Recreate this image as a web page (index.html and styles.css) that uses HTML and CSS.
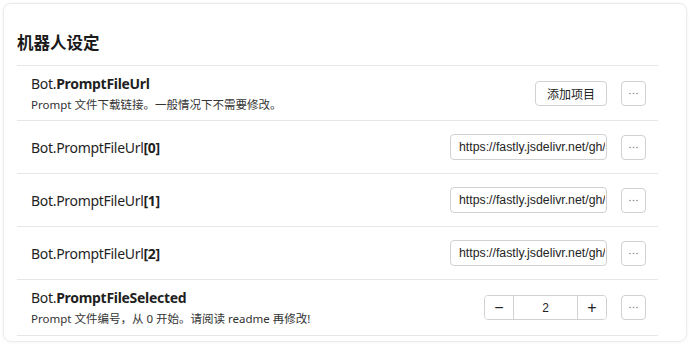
FILE: index.html
```html
<!DOCTYPE html>
<html lang="zh-CN">
<head>
<meta charset="utf-8">
<title>机器人设定</title>
<link rel="stylesheet" href="styles.css">
</head>
<body>
<div class="card">
  <h2 class="title">机器人设定</h2>
  <div class="list">
    <div class="row row-tall">
      <div class="info">
        <div class="name">Bot.<b>PromptFileUrl</b></div>
        <div class="desc">Prompt 文件下载链接。一般情况下不需要修改。</div>
      </div>
      <div class="ctrl">
        <button class="btn btn-add">添加项目</button>
        <button class="btn btn-more" aria-label="更多"><svg class="dots" width="11" height="3" viewBox="0 0 11 3"><circle cx="2" cy="1.5" r="0.8"/><circle cx="5.5" cy="1.5" r="0.8"/><circle cx="9" cy="1.5" r="0.8"/></svg></button>
      </div>
    </div>
    <div class="row">
      <div class="info">
        <div class="name">Bot.PromptFileUrl<b>[0]</b></div>
      </div>
      <div class="ctrl">
        <input class="text" type="text" value="https://fastly.jsdelivr.net/gh/Hyperlinked/prompts@main/0.md">
        <button class="btn btn-more" aria-label="更多"><svg class="dots" width="11" height="3" viewBox="0 0 11 3"><circle cx="2" cy="1.5" r="0.8"/><circle cx="5.5" cy="1.5" r="0.8"/><circle cx="9" cy="1.5" r="0.8"/></svg></button>
      </div>
    </div>
    <div class="row">
      <div class="info">
        <div class="name">Bot.PromptFileUrl<b>[1]</b></div>
      </div>
      <div class="ctrl">
        <input class="text" type="text" value="https://fastly.jsdelivr.net/gh/Hyperlinked/prompts@main/1.md">
        <button class="btn btn-more" aria-label="更多"><svg class="dots" width="11" height="3" viewBox="0 0 11 3"><circle cx="2" cy="1.5" r="0.8"/><circle cx="5.5" cy="1.5" r="0.8"/><circle cx="9" cy="1.5" r="0.8"/></svg></button>
      </div>
    </div>
    <div class="row">
      <div class="info">
        <div class="name">Bot.PromptFileUrl<b>[2]</b></div>
      </div>
      <div class="ctrl">
        <input class="text" type="text" value="https://fastly.jsdelivr.net/gh/Hyperlinked/prompts@main/2.md">
        <button class="btn btn-more" aria-label="更多"><svg class="dots" width="11" height="3" viewBox="0 0 11 3"><circle cx="2" cy="1.5" r="0.8"/><circle cx="5.5" cy="1.5" r="0.8"/><circle cx="9" cy="1.5" r="0.8"/></svg></button>
      </div>
    </div>
    <div class="row row-tall">
      <div class="info">
        <div class="name">Bot.<b>PromptFileSelected</b></div>
        <div class="desc">Prompt 文件编号，从 0 开始。请阅读 readme 再修改!</div>
      </div>
      <div class="ctrl">
        <div class="stepper">
          <button class="step">&minus;</button>
          <span class="step-val">2</span>
          <button class="step">+</button>
        </div>
        <button class="btn btn-more" aria-label="更多"><svg class="dots" width="11" height="3" viewBox="0 0 11 3"><circle cx="2" cy="1.5" r="0.8"/><circle cx="5.5" cy="1.5" r="0.8"/><circle cx="9" cy="1.5" r="0.8"/></svg></button>
      </div>
    </div>
  </div>
</div>
</body>
</html>
```

FILE: styles.css
```css
* { box-sizing: border-box; }
html, body { margin: 0; padding: 0; background: #ffffff; }
body {
  padding: 3px;
  font-family: "Noto Sans", "Noto Sans CJK SC", sans-serif;
  color: #1f1f1f;
}
.card {
  width: 684px;
  height: 339px;
  border: 1px solid #ebebeb;
  border-radius: 8px;
  box-shadow: 0 0 3px rgba(0,0,0,0.06);
  padding: 0 28px 0 13px;
  overflow: hidden;
}
.title {
  margin: 0;
  height: 61px;
  padding-top: 26px;
  font-size: 16.5px;
  line-height: 24px;
  font-weight: 700;
  color: #1a1a1a;
  font-family: "Noto Sans CJK SC", sans-serif;
}
.list {
  border-top: 1px solid #e6e6e6;
}
.row {
  display: flex;
  align-items: center;
  justify-content: space-between;
  height: 53px;
  border-bottom: 1px solid #e6e6e6;
  padding: 0 12px 0 14px;
}
.row-tall { height: 55px; }
.row:last-child { height: 56px; }
.name {
  font-size: 14px;
  line-height: 20px;
  color: #1f1f1f;
  letter-spacing: -0.3px;
}
.row:not(.row-tall) .name { padding-top: 2px; }
.name b { font-weight: 700; }
.desc {
  font-size: 11.5px;
  line-height: 17px;
  color: #333333;
  margin-top: 2px;
}
.ctrl {
  display: flex;
  align-items: center;
  gap: 14px;
}
.btn {
  height: 25px;
  border: 1px solid #d1d1d1;
  border-radius: 4px;
  background: #ffffff;
  color: #242424;
  font-family: "Noto Sans CJK SC", sans-serif;
  font-size: 12px;
  padding: 0;
  cursor: pointer;
}
.btn-add { width: 72px; }
.btn-more {
  width: 25px;
  display: flex;
  align-items: center;
  justify-content: center;
}
.dots { display: block; fill: #8a8a8a; }
.text {
  width: 157px;
  height: 26px;
  border: 1px solid #d1d1d1;
  border-radius: 4px;
  padding: 0 1px 0 8px;
  font-family: "Liberation Sans", Arial, sans-serif;
  font-size: 12.3px;
  color: #242424;
  background: #ffffff;
  outline: none;
}
.stepper {
  display: flex;
  width: 123px;
  height: 25px;
  border: 1px solid #d1d1d1;
  border-radius: 4px;
  overflow: hidden;
}
.step {
  width: 28px;
  border: none;
  background: #ffffff;
  padding: 0;
  font-family: "Liberation Sans", Arial, sans-serif;
  font-size: 16px;
  color: #242424;
  line-height: 1;
}
.step-val {
  flex: 1;
  border-left: 1px solid #d1d1d1;
  border-right: 1px solid #d1d1d1;
  display: flex;
  align-items: center;
  justify-content: center;
  font-family: "Liberation Sans", Arial, sans-serif;
  font-size: 12px;
  color: #242424;
}
```
